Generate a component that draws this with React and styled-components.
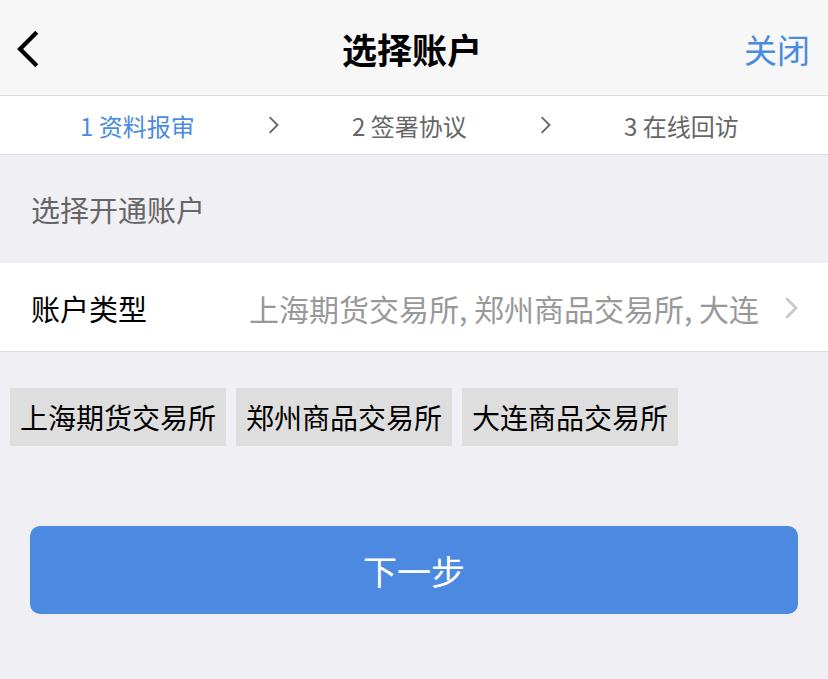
import React from "react";
import styled, { createGlobalStyle } from "styled-components";

const GlobalStyle = createGlobalStyle`
  html, body {
    margin: 0;
    padding: 0;
    background: #efeff4;
    font-family: "Noto Sans CJK SC", "Noto Sans", sans-serif;
  }
`;

const steps = [
  { label: "1 资料报审", active: true },
  { label: "2 签署协议" },
  { label: "3 在线回访" },
];

const exchanges = ["上海期货交易所", "郑州商品交易所", "大连商品交易所"];

function Chevron({ dir = "right", size = 20, color = "#666", width = 2.5 }) {
  const d = dir === "left" ? "M14 2 L4 12 L14 22" : "M6 2 L16 12 L6 22";
  return (
    <svg width={size * 0.8} height={size} viewBox="0 0 20 24" fill="none">
      <path d={d} stroke={color} strokeWidth={width} strokeLinecap="square" />
    </svg>
  );
}

function App() {
  return (
    <>
      <GlobalStyle />
      <Page>
        <NavBar>
          <BackButton>
            <Chevron dir="left" size={38} color="#000" width={2.8} />
          </BackButton>
          <Title>选择账户</Title>
          <CloseText>关闭</CloseText>
        </NavBar>

        <StepBar>
          {steps.map((s, i) => (
            <React.Fragment key={s.label}>
              {i > 0 && (
                <StepArrow>
                  <Chevron size={18} color="#666" width={2.6} />
                </StepArrow>
              )}
              <Step $active={s.active}>{s.label}</Step>
            </React.Fragment>
          ))}
        </StepBar>

        <SectionTitle>选择开通账户</SectionTitle>

        <Row>
          <RowLabel>账户类型</RowLabel>
          <RowValue>上海期货交易所, 郑州商品交易所, 大连</RowValue>
          <Chevron size={22} color="#c7c7cc" width={3} />
        </Row>

        <TagList>
          {exchanges.map((e) => (
            <Tag key={e}>{e}</Tag>
          ))}
        </TagList>

        <ButtonWrap>
          <NextButton>下一步</NextButton>
        </ButtonWrap>
      </Page>
    </>
  );
}

const Page = styled.div`
  width: 828px;
  min-height: 679px;
  background: #efeff4;
`;

const NavBar = styled.div`
  height: 95px;
  background: #f7f7f7;
  border-bottom: 1px solid #dcdcdc;
  display: flex;
  align-items: center;
  justify-content: space-between;
  padding: 2px 18px 0 14px;
  box-sizing: border-box;
  height: 96px;
`;

const BackButton = styled.div`
  width: 100px;
  display: flex;
  align-items: center;
`;

const Title = styled.div`
  font-size: 35px;
  font-weight: 700;
  color: #000;
`;

const CloseText = styled.div`
  width: 100px;
  text-align: right;
  font-size: 33px;
  color: #4a8be2;
`;

const StepBar = styled.div`
  height: 58px;
  background: #fff;
  border-bottom: 1px solid #dcdcdc;
  display: flex;
  align-items: center;
  padding-left: 80px;
`;

const Step = styled.div`
  font-size: 24px;
  color: ${(p) => (p.$active ? "#4a8be2" : "#666")};
  width: 114px;
  white-space: nowrap;
`;

const StepArrow = styled.div`
  width: 158px;
  display: flex;
  justify-content: center;
  align-items: center;
`;

const SectionTitle = styled.div`
  height: 108px;
  display: flex;
  align-items: center;
  padding-left: 31px;
  font-size: 29px;
  color: #666;
`;

const Row = styled.div`
  height: 89px;
  background: #fff;
  border-bottom: 1px solid #dcdcdc;
  display: flex;
  align-items: center;
  padding: 2px 28px 0 31px;
  box-sizing: border-box;
`;

const RowLabel = styled.div`
  font-size: 29px;
  color: #000;
  width: 218px;
  flex-shrink: 0;
`;

const RowValue = styled.div`
  flex: 1;
  font-size: 30px;
  color: #999;
  white-space: nowrap;
  overflow: hidden;
`;

const TagList = styled.div`
  display: flex;
  gap: 10px;
  padding: 36px 10px 0;
`;

const Tag = styled.div`
  height: 58px;
  background: #dedede;
  display: flex;
  align-items: center;
  padding: 0 10px;
  font-size: 28px;
  color: #000;
`;

const ButtonWrap = styled.div`
  padding: 80px 30px 0;
`;

const NextButton = styled.button`
  width: 100%;
  height: 88px;
  border: none;
  border-radius: 10px;
  background: #4c8ae2;
  color: #fff;
  font-size: 34px;
  font-family: inherit;
  cursor: pointer;
`;

export default App;
